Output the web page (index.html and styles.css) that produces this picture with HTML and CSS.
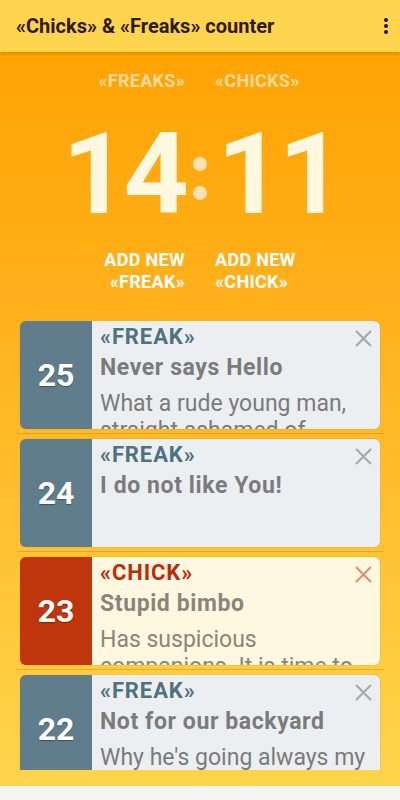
FILE: index.html
```html
<!DOCTYPE html>
<html lang="en">
<head>
    <meta charset="UTF-8">
    <meta name="viewport" content="width=device-width, initial-scale=1.0">
    <title>«Chicks» &amp; «Freaks» counter</title>
    <link rel="stylesheet" href="styles.css">
</head>
<body>
    <!-- Toolbar -->
    <header class="toolbar">
        <h1 class="toolbar-title">«Chicks» &amp; «Freaks» counter</h1>
        <div class="menu-dots">
            <span></span><span></span><span></span>
        </div>
    </header>

    <main class="main">
        <!-- Score -->
        <div class="score">
            <div class="score-label left">«FREAKS»</div>
            <div class="score-label right">«CHICKS»</div>
        </div>
        <div class="big-counter">
            <span class="big-num left">14</span>
            <span class="big-colon"><i></i><i></i></span>
            <span class="big-num right">11</span>
        </div>
        <div class="score add-row">
            <button class="add-button left">ADD NEW<br>«FREAK»</button>
            <button class="add-button right">ADD NEW<br>«CHICK»</button>
        </div>

        <!-- List of entries -->
        <div class="entries">
            <div class="entry freak">
                <div class="entry-num">25</div>
                <div class="entry-body">
                    <div class="entry-type">«FREAK»</div>
                    <div class="entry-name">Never says Hello</div>
                    <div class="entry-desc">What a rude young man, straight ashamed of himself.</div>
                    <svg class="entry-close" viewBox="0 0 16 16"><path d="M1 1 L15 15 M15 1 L1 15"/></svg>
                </div>
            </div>
            <div class="separator"></div>

            <div class="entry freak">
                <div class="entry-num">24</div>
                <div class="entry-body">
                    <div class="entry-type">«FREAK»</div>
                    <div class="entry-name">I do not like You!</div>
                    <svg class="entry-close" viewBox="0 0 16 16"><path d="M1 1 L15 15 M15 1 L1 15"/></svg>
                </div>
            </div>
            <div class="separator"></div>

            <div class="entry chick">
                <div class="entry-num">23</div>
                <div class="entry-body">
                    <div class="entry-type">«CHICK»</div>
                    <div class="entry-name">Stupid bimbo</div>
                    <div class="entry-desc">Has suspicious companions. It is time to go.</div>
                    <svg class="entry-close" viewBox="0 0 16 16"><path d="M1 1 L15 15 M15 1 L1 15"/></svg>
                </div>
            </div>
            <div class="separator"></div>

            <div class="entry freak">
                <div class="entry-num">22</div>
                <div class="entry-body">
                    <div class="entry-type">«FREAK»</div>
                    <div class="entry-name">Not for our backyard</div>
                    <div class="entry-desc">Why he's going always my way home?</div>
                    <svg class="entry-close" viewBox="0 0 16 16"><path d="M1 1 L15 15 M15 1 L1 15"/></svg>
                </div>
            </div>
        </div>
    </main>

    <div class="bottom-bar"></div>
</body>
</html>
```

FILE: styles.css
```css
/* Grundlegendes */
* {
    margin: 0;
    padding: 0;
    box-sizing: border-box;
    font-family: Roboto, "Liberation Sans", sans-serif;
}

body {
    width: 400px;
    height: 800px;
    overflow: hidden;
    display: flex;
    flex-direction: column;
    background-color: #f5f5f5;
}

/* Toolbar */
.toolbar {
    height: 52px;
    display: flex;
    align-items: center;
    justify-content: space-between;
    padding: 0 16px;
    background-color: #ffd54f;
    box-shadow: 0 2px 3px rgba(0, 0, 0, 0.12);
    position: relative;
    z-index: 2;
}

.toolbar-title {
    font-size: 20px;
    font-weight: bold;
    color: #2e1a0c;
}

.menu-dots {
    display: flex;
    flex-direction: column;
    gap: 2px;
    margin-right: -4px;
}

.menu-dots span {
    width: 4px;
    height: 4px;
    border-radius: 50%;
    background-color: #1a1008;
}

/* Hauptbereich */
.main {
    height: 734px;
    display: flex;
    flex-direction: column;
    background: linear-gradient(#ffa304 0%, #ffb31f 40%, #ffd54c 100%);
    padding-bottom: 16px;
}

.score {
    display: grid;
    grid-template-columns: 1fr 1fr;
    column-gap: 30px;
}

.score-label {
    margin-top: 18px;
    font-size: 18px;
    letter-spacing: 0.3px;
    font-weight: bold;
    color: rgba(255, 255, 255, 0.6);
}

.left {
    text-align: right;
}

.right {
    text-align: left;
}

.big-counter {
    display: grid;
    grid-template-columns: 1fr auto 1fr;
    align-items: center;
    height: 150px;
    margin-top: 8px;
}

.big-num {
    font-size: 114px;
    letter-spacing: -4px;
    font-weight: bold;
    color: #fff8e1;
    line-height: 1;
}

.big-num.left {
    margin-right: 8px;
}

.big-num.right {
    margin-left: 10px;
}

.big-colon {
    display: flex;
    flex-direction: column;
    gap: 15px;
    margin-top: 9px;
}

.big-colon i {
    width: 14px;
    height: 14px;
    border-radius: 50%;
    background-color: #fde1b4;
}

.add-button {
    background: none;
    border: none;
    font-size: 18px;
    letter-spacing: 0.3px;
    font-weight: bold;
    line-height: 22px;
    color: #fff;
}

/* Einträge */
.entries {
    flex: 1;
    overflow: hidden;
    margin-top: 28px;
    padding: 0 16px;
}

.entry {
    display: flex;
    height: 108px;
    margin: 0 4px;
    border-radius: 6px;
    overflow: hidden;
    box-shadow: 0 0 1px rgba(0, 0, 0, 0.35);
}

.entry-num {
    width: 72px;
    display: flex;
    align-items: center;
    justify-content: center;
    font-size: 32px;
    font-weight: bold;
    color: #fff;
    text-shadow: 0 1px 1px rgba(0, 0, 0, 0.35);
}

.entry-body {
    flex: 1;
    position: relative;
    padding: 2px 4px 0 8px;
    overflow: hidden;
}

.entry-type {
    font-size: 22px;
    letter-spacing: 0.9px;
    font-weight: bold;
    line-height: 28px;
}

.entry-name {
    font-size: 23px;
    letter-spacing: 0.6px;
    font-weight: bold;
    line-height: 34px;
}

.entry-desc {
    margin-top: 5px;
    font-size: 23px;
    line-height: 27px;
}

.entry-close {
    position: absolute;
    top: 9px;
    right: 8px;
    width: 17px;
    height: 17px;
    fill: none;
    stroke-width: 2;
}

.freak .entry-num {
    background-color: #607d8b;
}

.freak .entry-body {
    background-color: #eceff1;
    color: #7b7b7b;
}

.freak .entry-type {
    color: #4f7282;
}

.freak .entry-close {
    stroke: #a3a8aa;
}

.chick .entry-num {
    background-color: #bf360c;
}

.chick .entry-body {
    background-color: #fff8e1;
    color: #8a857a;
}

.chick .entry-type {
    color: #bf2a0a;
}

.chick .entry-close {
    stroke: #e09076;
}

.separator {
    height: 1px;
    margin: 4px 0 5px;
    background-color: rgba(190, 120, 0, 0.35);
}

.bottom-bar {
    flex: 1;
    background-color: #f5f5f5;
}
```
